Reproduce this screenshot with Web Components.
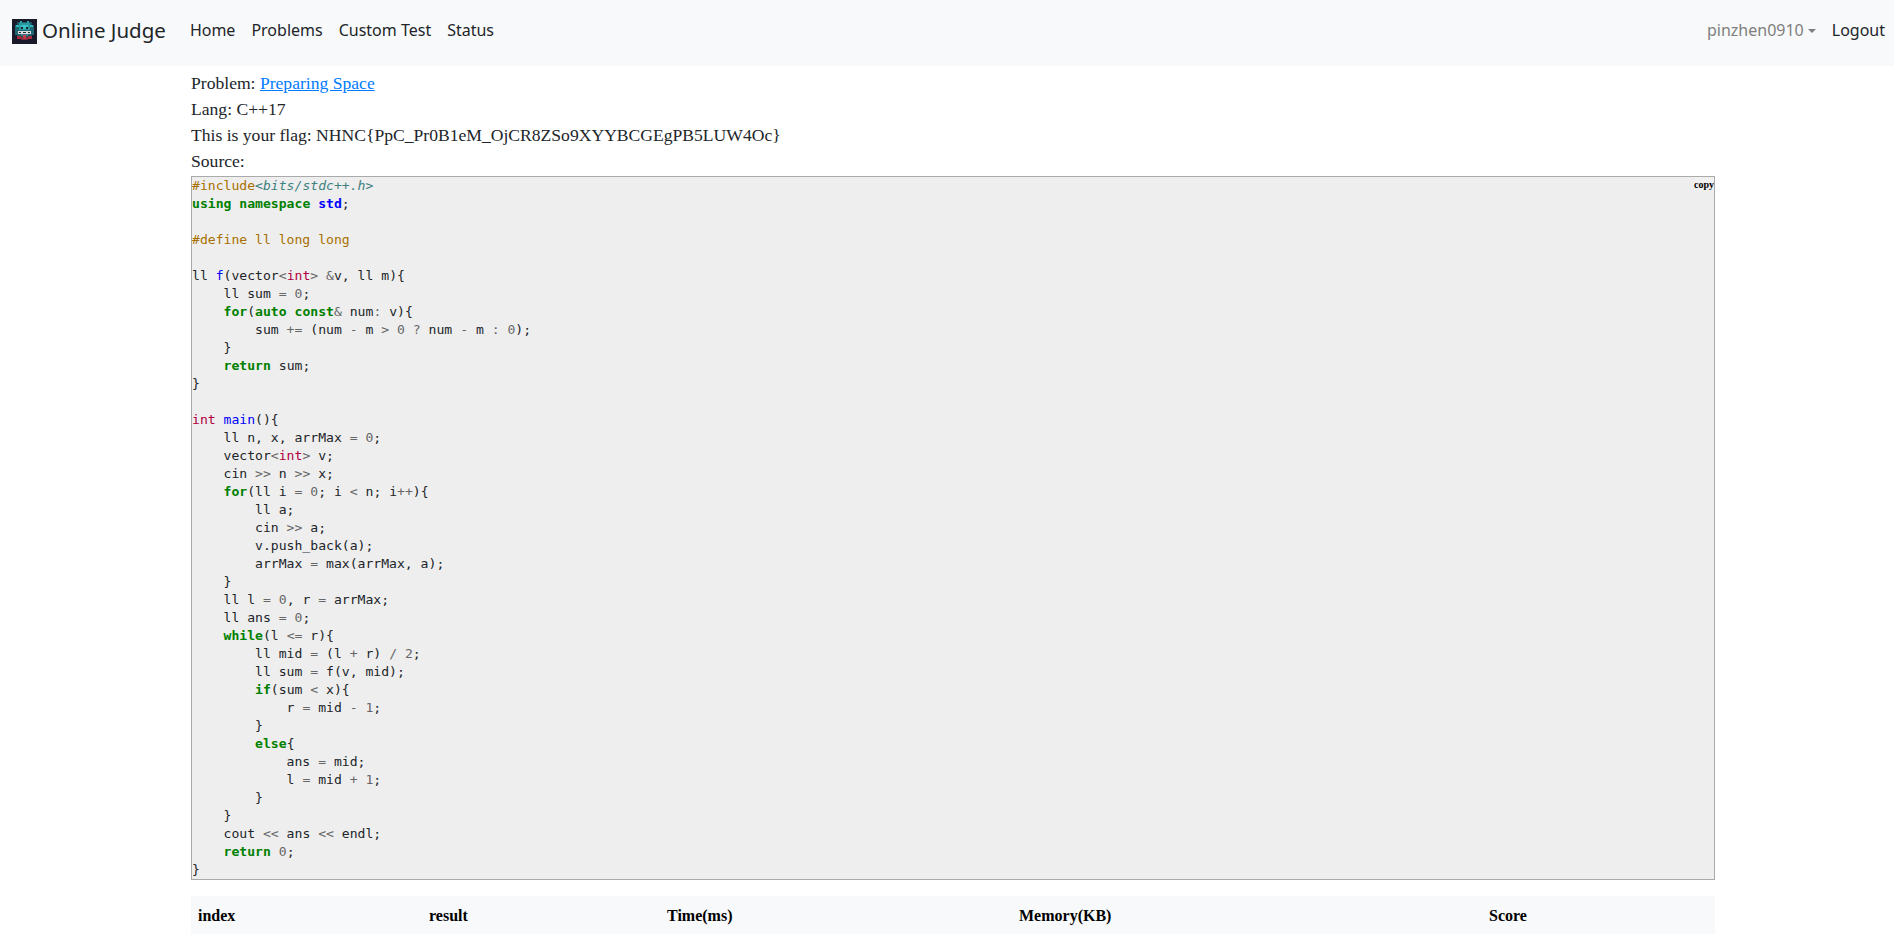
<!DOCTYPE html>
<html>

<head>
  <title>Online Judge</title>
  <style>
    html, body { margin: 0; padding: 0; background: #fff; overflow: hidden; height: 100%; }
  </style>
</head>

<body>
  <oj-navbar></oj-navbar>
  <oj-submission></oj-submission>

  <script>
    const SOURCE = `#include<bits/stdc++.h>
using namespace std;

#define ll long long

ll f(vector<int> &v, ll m){
    ll sum = 0;
    for(auto const& num: v){
        sum += (num - m > 0 ? num - m : 0);
    }
    return sum;
}

int main(){
    ll n, x, arrMax = 0;
    vector<int> v;
    cin >> n >> x;
    for(ll i = 0; i < n; i++){
        ll a;
        cin >> a;
        v.push_back(a);
        arrMax = max(arrMax, a);
    }
    ll l = 0, r = arrMax;
    ll ans = 0;
    while(l <= r){
        ll mid = (l + r) / 2;
        ll sum = f(v, mid);
        if(sum < x){
            r = mid - 1;
        }
        else{
            ans = mid;
            l = mid + 1;
        }
    }
    cout << ans << endl;
    return 0;
}`;

    class OjNavbar extends HTMLElement {
      constructor() {
        super();
        this.attachShadow({ mode: 'open' });
        this.shadowRoot.innerHTML = `<style>
          :host { display: flex; align-items: center; height: 66px; box-sizing: border-box; background: #f8f9fa;
            padding: 0 1px 3px 12px; font: 16px/24px "Noto Sans", sans-serif; color: #212529; }
          .brand { display: flex; align-items: center; gap: 5px; font-size: 20.5px; margin-right: 16px; }
          .brand svg { display: block; width: 25px; height: 25px; }
          .brand span { padding-bottom: 3px; }
          nav { display: flex; }
          a { padding: 0 8px 3px; }
          .spacer { flex: 1; }
          .user { color: #7f7f7f; }
          .user::after { content: ""; display: inline-block; margin-left: 4px; vertical-align: 3px;
            border-top: 4.8px solid; border-left: 4.8px solid transparent; border-right: 4.8px solid transparent; }
        </style>
        <div class="brand">
          <svg viewBox="0 0 25 25" shape-rendering="crispEdges">
            <rect width="25" height="25" fill="#181a29"/>
            <rect x="5" y="3" width="15" height="17" fill="#1d5560"/>
            <rect x="3" y="6" width="19" height="10" fill="#1d6570"/>
            <rect x="8" y="2" width="2" height="3" fill="#2aa6ad"/>
            <rect x="15" y="2" width="2" height="3" fill="#2aa6ad"/>
            <rect x="4" y="6" width="3" height="2" fill="#2fb5bb"/>
            <rect x="18" y="6" width="3" height="2" fill="#2fb5bb"/>
            <rect x="7" y="4" width="11" height="7" fill="#2b98a0"/>
            <rect x="9" y="6" width="7" height="4" fill="#37c2c6"/>
            <rect x="9" y="8" width="2" height="2" fill="#15222c"/>
            <rect x="14" y="8" width="2" height="2" fill="#15222c"/>
            <rect x="6" y="12" width="13" height="3" fill="#d5dadc"/>
            <rect x="7" y="13" width="2" height="1" fill="#23262f"/>
            <rect x="11" y="13" width="3" height="1" fill="#23262f"/>
            <rect x="16" y="13" width="2" height="1" fill="#23262f"/>
            <rect x="9" y="15" width="7" height="2" fill="#3c7c86"/>
            <rect x="5" y="17" width="4" height="3" fill="#a52c3c"/>
            <rect x="16" y="17" width="4" height="3" fill="#a52c3c"/>
            <rect x="9" y="18" width="7" height="3" fill="#7c2a3c"/>
            <rect x="11" y="16" width="3" height="4" fill="#c23a48"/>
          </svg>
          <span>Online Judge</span>
        </div>
        <nav>
          <a>Home</a><a>Problems</a><a>Custom Test</a><a>Status</a>
        </nav>
        <div class="spacer"></div>
        <nav>
          <a class="user">pinzhen0910</a><a>Logout</a>
        </nav>`;
      }
    }

    // small tokenizer, colours are the pygments default style
    class OjCode extends HTMLElement {
      constructor() {
        super();
        this.attachShadow({ mode: 'open' });
      }

      connectedCallback() {
        this.shadowRoot.innerHTML = `<style>
          :host { display: block; position: relative; border: 1px solid #aaa; background: #eee; color: #212529; }
          pre { margin: 0; font: 13.1px/18px "DejaVu Sans Mono", monospace; }
          .k { color: #008000; font-weight: bold; }
          .kt { color: #b00040; }
          .nn { color: #0000ff; font-weight: bold; }
          .nf { color: #0000ff; }
          .o, .mi { color: #666; }
          .cp { color: #a87000; }
          .cpf { color: #408080; font-style: italic; }
          button { position: absolute; top: 0; right: 0; width: 20px; height: 15px; padding: 0; border: 0; overflow: hidden;
            background: #f0f0f0; color: #000; font: bold 10px/15px "Liberation Serif", serif; white-space: nowrap; text-align: left; }
        </style>
        <pre></pre>
        <button>copy</button>`;
        this.shadowRoot.querySelector('pre').innerHTML = SOURCE.split('\n').map(l => this.highlight(l)).join('\n');
      }

      esc(s) {
        return s.replace(/&/g, '&amp;').replace(/</g, '&lt;').replace(/>/g, '&gt;');
      }

      span(cls, s) {
        return '<span class="' + cls + '">' + this.esc(s) + '</span>';
      }

      highlight(line) {
        if (line.startsWith('#include')) {
          return this.span('cp', '#include') + this.span('cpf', line.slice(8));
        }
        if (line.startsWith('#')) {
          return this.span('cp', line);
        }
        const isDef = /^(ll|int) \w+\(/.test(line);
        let out = '';
        let prev = '';
        const re = /[A-Za-z_]\w*|\d+|[-+*\/<>=&?:!]+|\s+|./g;
        let m;
        while ((m = re.exec(line))) {
          const t = m[0];
          if (/^(using|namespace|for|auto|const|return|while|if|else)$/.test(t)) {
            out += this.span('k', t);
          } else if (t === 'int') {
            out += this.span('kt', t);
          } else if (t === 'std' && prev === 'namespace') {
            out += this.span('nn', t);
          } else if (isDef && (t === 'f' || t === 'main') && line[m.index + t.length] === '(') {
            out += this.span('nf', t);
          } else if (/^\d/.test(t)) {
            out += this.span('mi', t);
          } else if (/^[-+*\/<>=&?:!]/.test(t)) {
            out += this.span('o', t);
          } else {
            out += this.esc(t);
          }
          if (t.trim()) prev = t;
        }
        return out;
      }
    }

    class OjResultTable extends HTMLElement {
      constructor() {
        super();
        this.attachShadow({ mode: 'open' });
        this.shadowRoot.innerHTML = `<style>
          :host { display: block; margin-top: 16px; }
          table { width: 100%; table-layout: fixed; border-collapse: collapse; background: #f8f9fa; }
          th { height: 38px; padding: 2px 7px 0; text-align: left; font: bold 16px/24px "Liberation Serif", serif; color: #000; box-sizing: border-box; }
        </style>
        <table>
          <colgroup><col style="width:231px"><col style="width:238px"><col style="width:352px"><col style="width:470px"><col style="width:233px"></colgroup>
          <tr><th>index</th><th>result</th><th>Time(ms)</th><th>Memory(KB)</th><th>Score</th></tr>
        </table>`;
      }
    }

    class OjSubmission extends HTMLElement {
      constructor() {
        super();
        this.attachShadow({ mode: 'open' });
        this.shadowRoot.innerHTML = `<style>
          :host { display: block; width: 1524px; margin-left: 191px;
            font: 17.6px/26px "Liberation Serif", serif; color: #212529; }
          .rows { padding: 4px 0 2px; }
          .rows div:nth-child(3) { margin-top: .4px; }
          a { color: #007bff; text-decoration: underline; }
        </style>
        <div class="rows">
          <div>Problem: <a>Preparing Space</a></div>
          <div>Lang: C++17</div>
          <div>This is your flag: NHNC{PpC_Pr0B1eM_OjCR8ZSo9XYYBCGEgPB5LUW4Oc}</div>
          <div>Source:</div>
        </div>
        <oj-code></oj-code>
        <oj-result-table></oj-result-table>`;
      }
    }

    customElements.define('oj-navbar', OjNavbar);
    customElements.define('oj-code', OjCode);
    customElements.define('oj-result-table', OjResultTable);
    customElements.define('oj-submission', OjSubmission);
  </script>
</body>

</html>
